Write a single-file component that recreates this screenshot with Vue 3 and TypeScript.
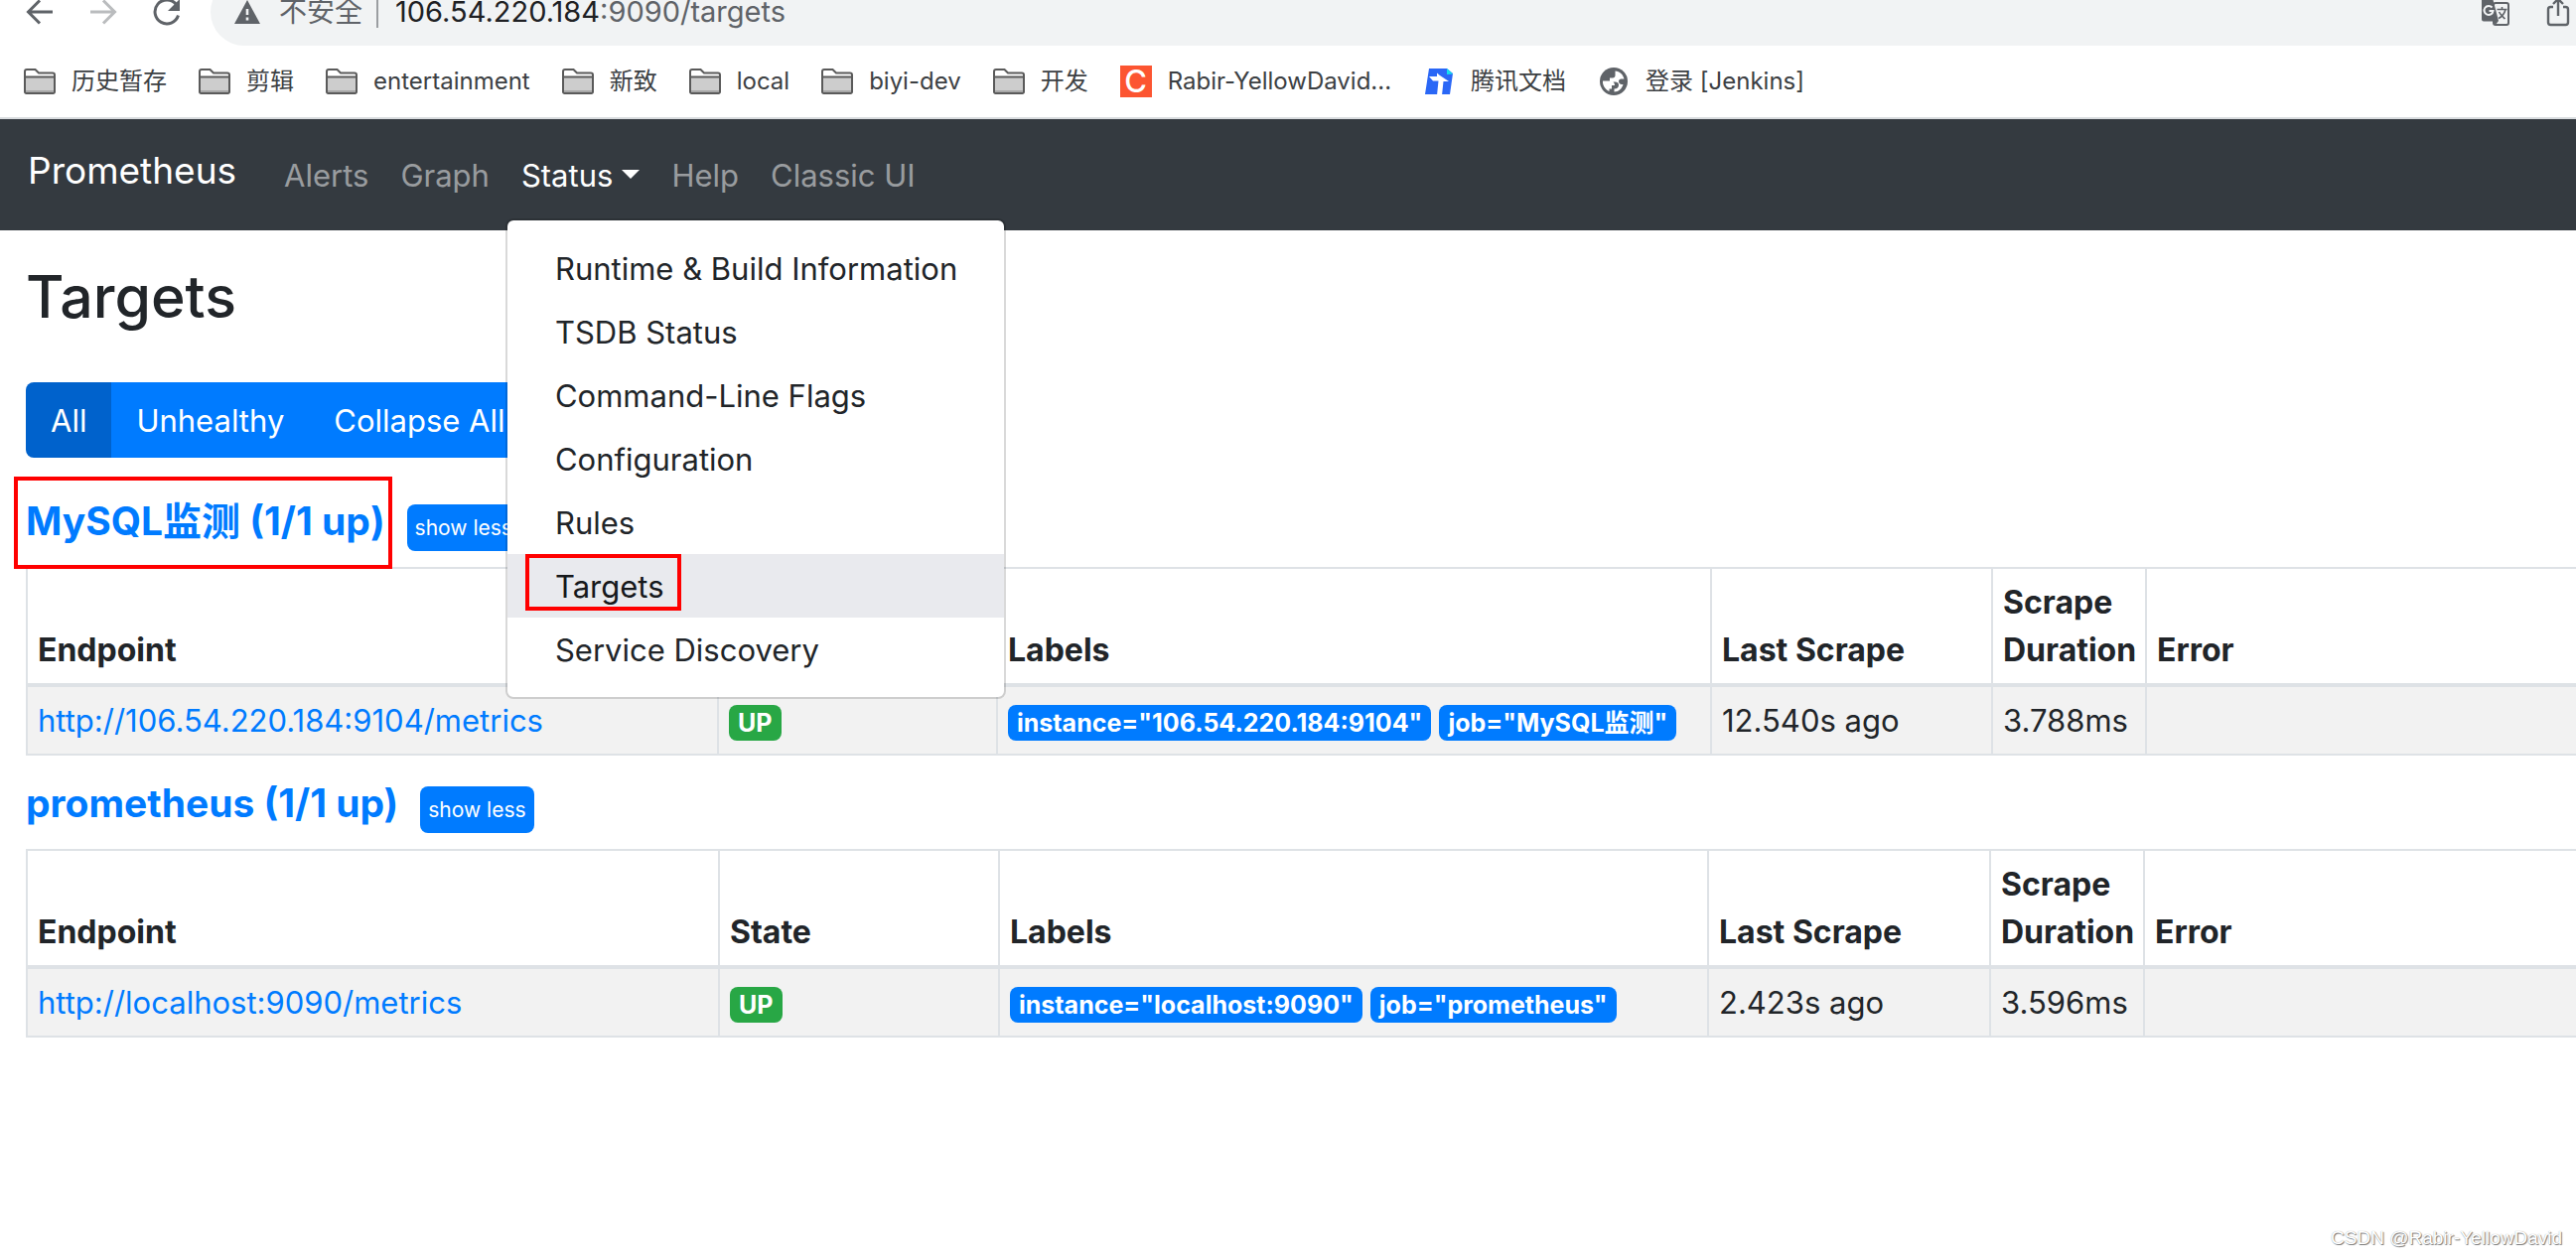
<script setup lang="ts">
interface Bookmark {
  label: string
  icon: 'folder' | 'csdn' | 'docs' | 'globe'
}

interface Target {
  endpoint: string
  state: string
  labels: string[]
  lastScrape: string
  duration: string
}

interface Pool {
  name: string
  marked: boolean
  columns: number[]
  targets: Target[]
}

const bookmarks: Bookmark[] = [
  { label: '历史暂存', icon: 'folder' },
  { label: '剪辑', icon: 'folder' },
  { label: 'entertainment', icon: 'folder' },
  { label: '新致', icon: 'folder' },
  { label: 'local', icon: 'folder' },
  { label: 'biyi-dev', icon: 'folder' },
  { label: '开发', icon: 'folder' },
  { label: 'Rabir-YellowDavid...', icon: 'csdn' },
  { label: '腾讯文档', icon: 'docs' },
  { label: '登录 [Jenkins]', icon: 'globe' },
]

const statusMenu: string[] = [
  'Runtime & Build Information',
  'TSDB Status',
  'Command-Line Flags',
  'Configuration',
  'Rules',
  'Targets',
  'Service Discovery',
]

const pools: Pool[] = [
  {
    name: 'MySQL监测 (1/1 up)',
    marked: true,
    columns: [696, 281, 719, 283, 155],
    targets: [
      {
        endpoint: 'http://106.54.220.184:9104/metrics',
        state: 'UP',
        labels: ['instance="106.54.220.184:9104"', 'job="MySQL监测"'],
        lastScrape: '12.540s ago',
        duration: '3.788ms',
      },
    ],
  },
  {
    name: 'prometheus (1/1 up)',
    marked: false,
    columns: [697, 282, 714, 284, 155],
    targets: [
      {
        endpoint: 'http://localhost:9090/metrics',
        state: 'UP',
        labels: ['instance="localhost:9090"', 'job="prometheus"'],
        lastScrape: '2.423s ago',
        duration: '3.596ms',
      },
    ],
  },
]
</script>

<template>
  <div class="window">
    <header class="browser">
      <div class="toolbar">
        <button class="tool" aria-label="Back">
          <svg width="32" height="32" viewBox="0 0 32 32"><path d="M29 16H5M16 4.500L4.500 16L16 27.500" fill="none" stroke="#5f6368" stroke-width="3" /></svg>
        </button>
        <button class="tool" aria-label="Forward">
          <svg width="32" height="32" viewBox="0 0 32 32"><path d="M3 16h24M16 4.500L27.500 16L16 27.500" fill="none" stroke="#babcbe" stroke-width="3" /></svg>
        </button>
        <button class="tool" aria-label="Reload">
          <svg width="32" height="32" viewBox="0 0 32 32"><path d="M25.500 8.500A12 12 0 1 0 27.500 19.500" fill="none" stroke="#5f6368" stroke-width="3" /><path d="M29 3v12H17z" fill="#5f6368" /></svg>
        </button>
        <div class="omnibox">
          <svg class="warn" width="26" height="24" viewBox="0 0 26 24"><path d="M13 0L26 24H0z" fill="#5f6368" /><path d="M13 9v6M13 17.500v3" stroke="#f1f3f4" stroke-width="2.600" /></svg>
          <span class="insecure">不安全</span>
          <span class="rule"></span>
          <span class="url"><b>106.54.220.184</b>:9090/targets</span>
          <button class="tool" aria-label="Translate">
            <svg width="30" height="32" viewBox="0 0 30 32">
              <rect x="13" y="7" width="15" height="22" rx="2" fill="none" stroke="#5f6368" stroke-width="2" />
              <path d="M16.500 13.500h10M21.500 11v2.500M25 13.500c-1 4-4 7.500-7 9M18.500 16c1.500 3 4 5 6 7" fill="none" stroke="#5f6368" stroke-width="1.600" />
              <path d="M3 2h9l6 23-3 4-2-3.500H3a2 2 0 0 1-2-2V4a2 2 0 0 1 2-2z" fill="#5f6368" />
              <path d="M11.500 11.500A4.500 4.500 0 1 0 12.500 15H8.500" fill="none" stroke="#f1f3f4" stroke-width="2" />
            </svg>
          </button>
          <button class="tool share" aria-label="Share">
            <svg width="24" height="32" viewBox="0 0 24 32"><path d="M7 11H4.500A2.500 2.500 0 0 0 2 13.500v13A2.500 2.500 0 0 0 4.500 29h15a2.500 2.500 0 0 0 2.500-2.500v-13A2.500 2.500 0 0 0 19.500 11H17M12 20V4M7 8l5-5 5 5" fill="none" stroke="#5f6368" stroke-width="2.400" /></svg>
          </button>
        </div>
      </div>
      <nav class="bookmarks" aria-label="Bookmarks">
        <a v-for="item in bookmarks" :key="item.label" href="#" class="bookmark">
          <svg v-if="item.icon === 'folder'" width="32" height="26" viewBox="0 0 32 26">
            <path d="M1 23.500V3A2 2 0 0 1 3 1h8.500l3.500 3.500h14a2 2 0 0 1 2 2v17a1.500 1.500 0 0 1-1.500 1.500h-27A1.500 1.500 0 0 1 1 23.500z" fill="#fff" stroke="#5a5a5a" stroke-width="2" />
            <path d="M2 9h28v15H2z" fill="#cdcdcd" />
            <path d="M2 22h28v2H2z" fill="#a8a8a8" />
            <path d="M1 8.500h30" stroke="#5a5a5a" stroke-width="2" />
          </svg>
          <span v-else-if="item.icon === 'csdn'" class="csdn" aria-hidden="true">C</span>
          <svg v-else-if="item.icon === 'docs'" width="32" height="28" viewBox="0 0 32 28">
            <path d="M6 1h18l6 5-3 21H2z" fill="#2a67f6" />
            <path d="M24 1l6 5.500-6 .5z" fill="#13e0f0" />
            <path d="M6 9h8V5.500L17 8l9 6h-5.500L19 28h-5l1.500-14.500H10z" fill="#fff" />
          </svg>
          <svg v-else width="32" height="30" viewBox="0 0 32 30">
            <circle cx="16" cy="15" r="14" fill="#5f6368" />
            <path d="M5 14.500H12c3 0 5 1.500 5 4.500h-3v3.500h-2.500v2.500C7.500 23 4.500 19 5 14.500zM17.500 4.500c4.500.500 8 3.500 9 8h-3c-1.500 0-2.500 1-2.500 2.500 0 2.500 2 3 4.500 3-1 4-4.500 7.500-9 7.500v-3c3 0 4.500-1.500 4.500-4 0-2-1.500-3-3.500-3h-5.500v-4h3c1.500 0 2.500-1 2.500-2.500z" fill="#fff" />
          </svg>
          <span>{{ item.label }}</span>
        </a>
      </nav>
    </header>

    <nav class="navbar" aria-label="Main">
      <a href="#" class="brand">Prometheus</a>
      <ul class="links">
        <li><a href="#" class="link">Alerts</a></li>
        <li><a href="#" class="link">Graph</a></li>
        <li class="dropdown">
          <button class="link current" aria-expanded="true">Status<span class="caret"></span></button>
          <div class="menu">
            <a v-for="entry in statusMenu" :key="entry" href="#" class="entry" :class="{ hovered: entry === 'Targets' }">
              {{ entry }}
              <span v-if="entry === 'Targets'" class="mark"></span>
            </a>
          </div>
        </li>
        <li><a href="#" class="link">Help</a></li>
        <li><a href="#" class="link">Classic UI</a></li>
      </ul>
    </nav>

    <main class="content">
      <h2>Targets</h2>
      <div class="filters" role="group">
        <button class="filter active">All</button>
        <button class="filter">Unhealthy</button>
        <button class="filter">Collapse All</button>
      </div>

      <section v-for="pool in pools" :key="pool.name" class="pool">
        <div class="pool-head">
          <h3><a href="#">{{ pool.name }}</a><span v-if="pool.marked" class="mark"></span></h3>
          <button class="toggle">show less</button>
        </div>
        <table>
          <colgroup>
            <col v-for="(width, i) in pool.columns" :key="i" :style="{ width: width + 'px' }" />
            <col />
          </colgroup>
          <thead>
            <tr>
              <th>Endpoint</th>
              <th>State</th>
              <th>Labels</th>
              <th>Last Scrape</th>
              <th>Scrape Duration</th>
              <th>Error</th>
            </tr>
          </thead>
          <tbody>
            <tr v-for="target in pool.targets" :key="target.endpoint">
              <td><a href="#">{{ target.endpoint }}</a></td>
              <td><span class="badge up">{{ target.state }}</span></td>
              <td><span v-for="label in target.labels" :key="label" class="badge">{{ label }}</span></td>
              <td>{{ target.lastScrape }}</td>
              <td>{{ target.duration }}</td>
              <td></td>
            </tr>
          </tbody>
        </table>
      </section>
    </main>

    <footer class="watermark">CSDN @Rabir-YellowDavid</footer>
  </div>
</template>

<style>
body {
  margin: 0;
  background: #fff;
}
</style>

<style scoped>
.window {
  display: flex;
  flex-direction: column;
  min-height: 100vh;
  overflow: hidden;
  color: #212529;
  font: 400 31px/48px Inter, "Noto Sans CJK SC", sans-serif;
}

a {
  color: #007bff;
  text-decoration: none;
}

button {
  margin: 0;
  padding: 0;
  border: 0;
  background: none;
  font: inherit;
}

svg {
  display: block;
  flex: none;
}

.browser {
  border-bottom: 2px solid #d9dcdf;
}

.toolbar {
  display: flex;
  align-items: center;
  gap: 32px;
  height: 68px;
  margin-top: -22px;
  padding-left: 24px;
}

.toolbar > .omnibox {
  margin-left: -4px;
}

.omnibox {
  display: flex;
  flex: 1;
  align-items: center;
  box-sizing: border-box;
  height: 68px;
  padding: 0 6px 0 24px;
  border-radius: 34px 0 0 34px;
  background: #f1f3f4;
  color: #5f6368;
  font-size: 28px;
}

.insecure {
  margin-left: 19px;
}

.rule {
  width: 2px;
  height: 32px;
  margin: 0 17px 0 14px;
  background: #9b9ea1;
}

.url {
  flex: 1;
  font-size: 29px;
}

.url b {
  color: #202124;
  font-weight: 400;
}

.share {
  margin-left: 36px;
}

.bookmarks {
  display: flex;
  align-items: center;
  gap: 32px;
  height: 72px;
  padding: 0 24px;
}

.bookmark {
  display: flex;
  align-items: center;
  gap: 16px;
  color: #3c4043;
  font-size: 24px;
  line-height: 32px;
  white-space: nowrap;
}

.csdn {
  width: 32px;
  background: #fc5531;
  color: #fff;
  font-size: 31px;
  font-weight: 500;
  text-align: center;
}

.navbar {
  display: flex;
  align-items: center;
  padding: 16px 28px;
  background: #343a40;
}

.brand {
  margin: 0 32px 8px 0;
  color: #fff;
  font-size: 37px;
}

.links {
  display: flex;
  margin: 0;
  padding: 0;
  list-style: none;
}

.link {
  display: flex;
  align-items: center;
  padding: 17px 16px 15px;
  color: rgba(255, 255, 255, 0.5);
}

.link.current {
  color: #fff;
}

.caret {
  margin: 0 0 4px 9px;
  border: 9px solid transparent;
  border-top-color: #fff;
  border-bottom: 0;
}

.dropdown {
  position: relative;
}

.menu {
  position: absolute;
  z-index: 2;
  top: 100%;
  left: 0;
  box-sizing: border-box;
  width: 504px;
  margin-top: 4px;
  padding: 16px 0;
  border: 2px solid rgba(0, 0, 0, 0.15);
  border-radius: 8px;
  background: #fff;
  background-clip: padding-box;
}

.entry {
  display: block;
  position: relative;
  padding: 9px 48px 7px;
  color: #212529;
  white-space: nowrap;
}

.entry.hovered {
  background: #e9eaee;
  color: #16181b;
}

.mark {
  position: absolute;
  box-sizing: border-box;
  border: 4px solid #f00;
}

.entry .mark {
  inset: 0 auto 7px 18px;
  width: 157px;
}

.content {
  padding-left: 26px;
}

h2 {
  margin: 28px 0 48px;
  font-size: 59px;
  font-weight: 500;
  line-height: 77px;
}

.filters {
  display: flex;
  margin-bottom: 39px;
}

.filter {
  padding: 15px 25px 13px;
  background: #007bff;
  color: #fff;
}

.filter.active {
  border-radius: 8px 0 0 8px;
  background: #0062cc;
}

.filter:last-child {
  border-radius: 0 8px 8px 0;
}

.pool + .pool {
  margin-top: 23px;
}

.pool-head {
  display: flex;
  align-items: flex-start;
  gap: 22px;
  height: 71px;
}

h3 {
  position: relative;
  margin: 0;
  padding-top: 1px;
  font-size: 39px;
  font-weight: 700;
}

h3 .mark {
  inset: -20px -7px -24px -12px;
}

.toggle {
  margin-top: 8px;
  padding: 0 8px;
  border-radius: 8px;
  background: #007bff;
  color: #fff;
  font-size: 21px;
  line-height: 47px;
}

table {
  width: 100%;
  border-collapse: collapse;
  table-layout: fixed;
}

th,
td {
  padding: 10px 10px 9px;
  border: 2px solid #dee2e6;
  text-align: left;
  vertical-align: top;
}

th {
  border-bottom-width: 4px;
  font-size: 32px;
  font-weight: 700;
  vertical-align: bottom;
}

th:last-child,
td:last-child {
  border-right: 0;
}

td {
  background: #f2f2f2;
  white-space: nowrap;
}

.badge {
  display: inline-block;
  margin-right: 8px;
  padding: 0 9px;
  border-radius: 8px;
  background: #007bff;
  color: #fff;
  font-size: 25px;
  font-weight: 700;
  line-height: 36px;
}

.badge.up {
  background: #28a745;
}

.watermark {
  align-self: flex-end;
  margin-top: auto;
  padding: 0 14px 3px 0;
  color: #fff;
  font: 19px/28px "Liberation Sans", sans-serif;
  text-shadow: 1px 1px 1px #777, 0 0 1px #999;
}
</style>
